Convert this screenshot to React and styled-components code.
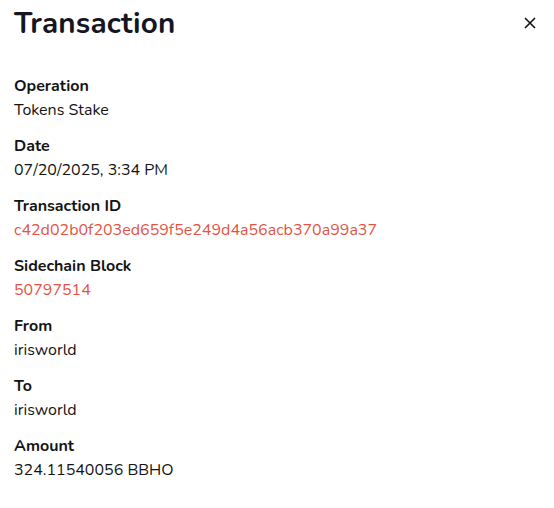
import React from "react";
import styled, { createGlobalStyle } from "styled-components";

const Global = createGlobalStyle`
  body { margin: 0; background: #fff; font-family: "Nunito", Lato, "Open Sans", sans-serif; color: #141414; }
`;

const Panel = styled.div`
  width: 554px;
  box-sizing: border-box;
  padding: 2px 14px 0 14px;
`;

const Header = styled.div`
  display: flex;
  align-items: center;
  justify-content: space-between;
  height: 42px;
`;

const Title = styled.h1`
  margin: 0;
  font-size: 29.6px;
  font-weight: 700;
  color: #161622;
  letter-spacing: 0.2px;
`;

const Close = styled.button`
  border: none;
  background: none;
  padding: 0;
  width: 20px;
  height: 20px;
  margin-right: 0;
  margin-top: -1px;
  display: flex;
  align-items: center;
  justify-content: center;
`;

const List = styled.dl`
  margin: 30px 0 0 0;
  display: flex;
  flex-direction: column;
  gap: 12px;
`;

const Item = styled.div`
  display: flex;
  flex-direction: column;
`;

const Label = styled.dt`
  font-size: 16px;
  font-weight: 700;
  line-height: 24px;
`;

const Value = styled.dd`
  margin: 0;
  font-size: 16px;
  line-height: 24px;
  color: ${(p) => (p.$link ? "#e25545" : "#141414")};
`;

const rows = [
  ["Operation", "Tokens Stake"],
  ["Date", "07/20/2025, 3:34 PM"],
  ["Transaction ID", "c42d02b0f203ed659f5e249d4a56acb370a99a37", true],
  ["Sidechain Block", "50797514", true],
  ["From", "irisworld"],
  ["To", "irisworld"],
  ["Amount", "324.11540056 BBHO"],
];

export default function App() {
  return (
    <>
      <Global />
      <Panel>
        <Header>
          <Title>Transaction</Title>
          <Close aria-label="Close">
            <svg width="12" height="12" viewBox="0 0 12 12">
              <path d="M1 1L11 11M11 1L1 11" stroke="#111" strokeWidth="1.6" />
            </svg>
          </Close>
        </Header>
        <List>
          {rows.map(([l, v, link]) => (
            <Item key={l}>
              <Label>{l}</Label>
              <Value $link={link}>{v}</Value>
            </Item>
          ))}
        </List>
      </Panel>
    </>
  );
}
